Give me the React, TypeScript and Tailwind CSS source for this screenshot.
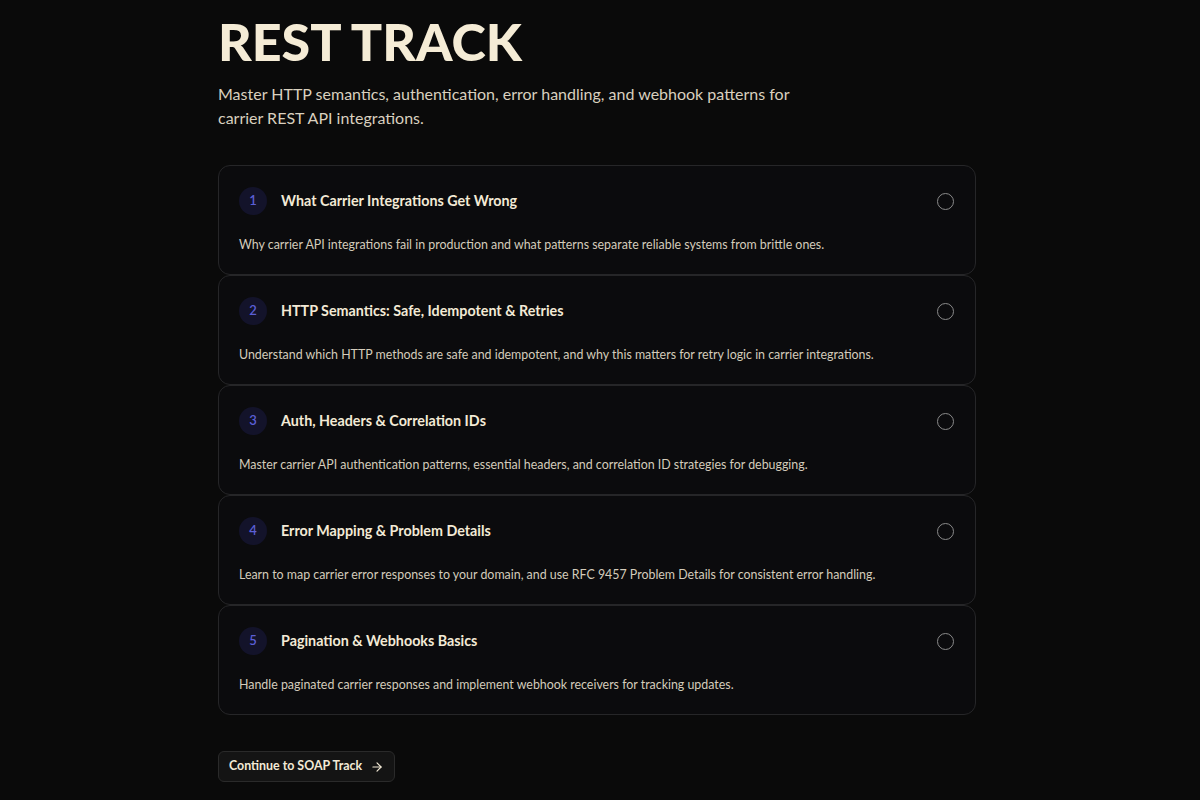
import React from 'react';
import { ArrowRight } from 'lucide-react';

const lessons = [
  {
    n: 1,
    title: 'What Carrier Integrations Get Wrong',
    desc: 'Why carrier API integrations fail in production and what patterns separate reliable systems from brittle ones.',
  },
  {
    n: 2,
    title: 'HTTP Semantics: Safe, Idempotent & Retries',
    desc: 'Understand which HTTP methods are safe and idempotent, and why this matters for retry logic in carrier integrations.',
  },
  {
    n: 3,
    title: 'Auth, Headers & Correlation IDs',
    desc: 'Master carrier API authentication patterns, essential headers, and correlation ID strategies for debugging.',
  },
  {
    n: 4,
    title: 'Error Mapping & Problem Details',
    desc: 'Learn to map carrier error responses to your domain, and use RFC 9457 Problem Details for consistent error handling.',
  },
  {
    n: 5,
    title: 'Pagination & Webhooks Basics',
    desc: 'Handle paginated carrier responses and implement webhook receivers for tracking updates.',
  },
];

export default function App() {
  return (
    <div className="min-h-[800px] bg-[#0a0a0a] font-['Lato','Noto_Sans',sans-serif] text-[#f3ead6]">
      <div className="ml-[218px] w-[758px] pt-[13px] pb-[19px]">
        <h1 className="text-[52px] font-black leading-[1.1] tracking-[0px] text-[#f5ecd6]">REST TRACK</h1>
        <p className="mt-[12px] w-[600px] text-[16px] leading-[24px] text-[#d9d0bf]">
          Master HTTP semantics, authentication, error handling, and webhook patterns for carrier REST API integrations.
        </p>

        <div className="mt-[35px] flex flex-col">
          {lessons.map((l) => (
            <div key={l.n} className="rounded-xl border border-[#262628] bg-[#0b0b0d] px-5 pt-[21px] pb-[19px]">
              <div className="flex items-center gap-3.5">
                <div className="flex h-7 w-7 shrink-0 items-center justify-center rounded-full bg-[#13132a] text-[13px] font-semibold text-[#5b5fd6]">
                  {l.n}
                </div>
                <h3 className="flex-1 text-[14.3px] font-bold text-[#f3ead6]">{l.title}</h3>
                <div className="mr-[1px] h-[17px] w-[17px] rounded-full border-[1.5px] border-[#8a8a8a]" />
              </div>
              <p className="mt-[20px] text-[12.4px] leading-[20px] text-[#d4ccbb]">{l.desc}</p>
            </div>
          ))}
        </div>

        <button className="mt-[36px] flex h-[31px] items-center gap-2 rounded-md border border-[#2a2a2a] bg-[#141414] px-[10px] text-[12.4px] font-bold text-[#f3ead6]">
          Continue to SOAP Track
          <ArrowRight size={14} strokeWidth={2} />
        </button>
      </div>
    </div>
  );
}
